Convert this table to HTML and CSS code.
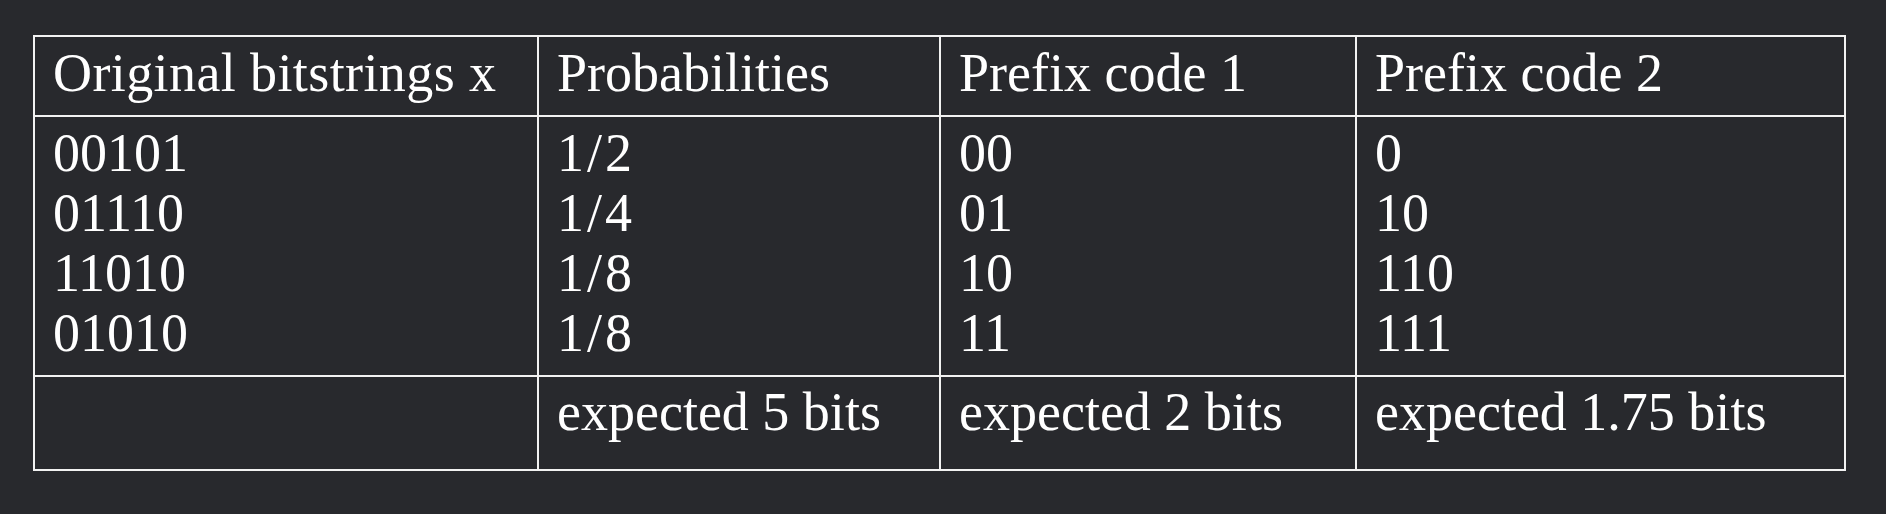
FILE: index.html
```html
<!DOCTYPE html>
<html>
<head>
<meta charset="utf-8">
<link rel="stylesheet" href="styles.css">
</head>
<body>
<div class="page">
  <table class="codes">
    <colgroup>
      <col class="c1"><col class="c2"><col class="c3"><col class="c4">
    </colgroup>
    <thead>
      <tr>
        <th class="wide">Original bitstrings x</th>
        <th>Probabilities</th>
        <th>Prefix code 1</th>
        <th>Prefix code 2</th>
      </tr>
    </thead>
    <tbody>
      <tr>
        <td>00101<br>01110<br>11010<br>01010</td>
        <td class="frac">1/2<br>1/4<br>1/8<br>1/8</td>
        <td>00<br>01<br>10<br>11</td>
        <td>0<br>10<br>110<br>111</td>
      </tr>
      <tr class="foot">
        <td></td>
        <td>expected 5 bits</td>
        <td>expected 2 bits</td>
        <td>expected 1.75 bits</td>
      </tr>
    </tbody>
  </table>
</div>
</body>
</html>
```

FILE: styles.css
```css
html, body {
  margin: 0;
  padding: 0;
  background: #28292d;
}

.page {
  padding: 35px 0 0 33px;
}

.codes {
  table-layout: fixed;
  width: 1813px;
  border: 1px solid #f2f2f2;
  border-collapse: separate;
  border-spacing: 0;
  font-family: "Liberation Serif", "Times New Roman", serif;
  font-size: 54px;
  line-height: 60px;
  color: #ffffff;
}

.c1 { width: 504px; }
.c2 { width: 402px; }
.c3 { width: 416px; }
.c4 { width: 489px; }

.codes th,
.codes td {
  border: 1px solid #f2f2f2;
  padding: 6px 18px 12px 18px;
  text-align: left;
  vertical-align: top;
  font-weight: normal;
  white-space: nowrap;
}

.codes .wide {
  letter-spacing: 0.4px;
}

.codes .frac {
  letter-spacing: 3px;
}

.codes .foot td {
  padding-top: 5px;
  padding-bottom: 27px;
}
```
